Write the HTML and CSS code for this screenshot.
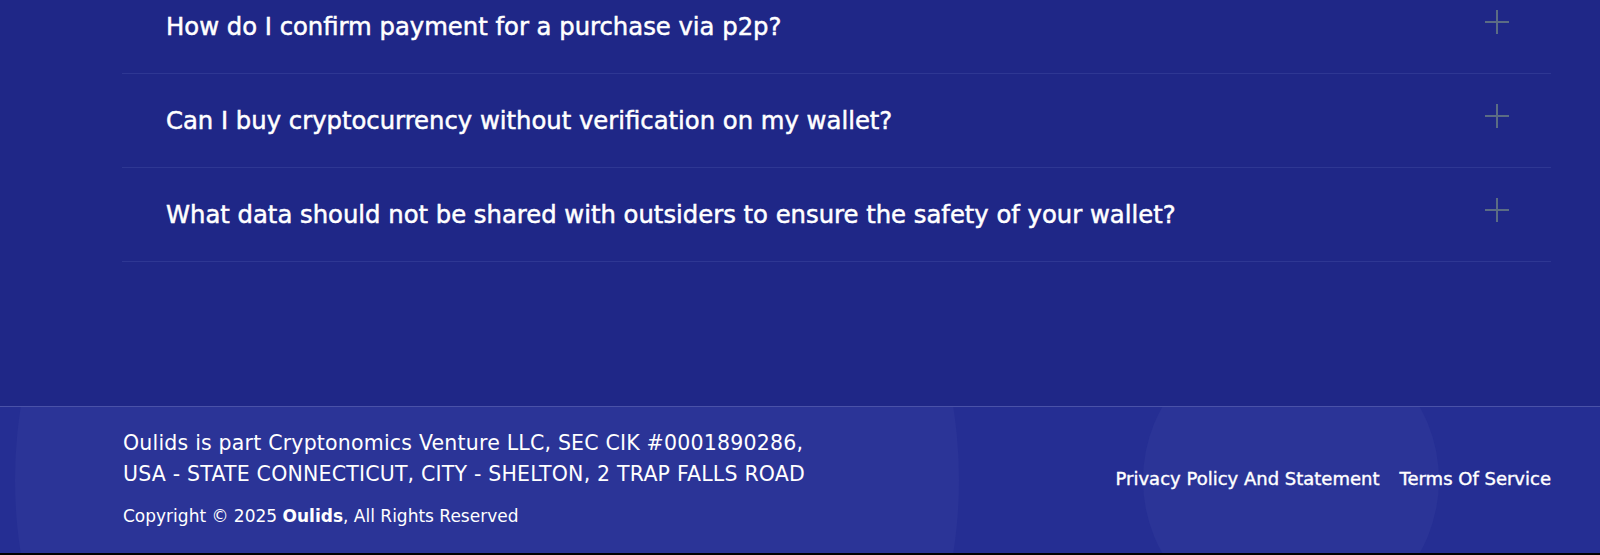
FILE: index.html
```html
<!DOCTYPE html>
<html lang="en">
<head>
    <meta charset="UTF-8">
    <title>FAQ - Oulids</title>
    <link rel="stylesheet" href="styles.css">
</head>
<body>
    <section class="faq">
        <div class="wrap">
            <div class="faq-item">
                <h3 class="faq-question">How do I confirm payment for a purchase via p2p?</h3>
                <svg class="faq-plus" width="24" height="24" viewBox="0 0 24 24"><path d="M12 0V24M0 12H24"/></svg>
            </div>
            <div class="faq-item">
                <h3 class="faq-question">Can I buy cryptocurrency without verification on my wallet?</h3>
                <svg class="faq-plus" width="24" height="24" viewBox="0 0 24 24"><path d="M12 0V24M0 12H24"/></svg>
            </div>
            <div class="faq-item">
                <h3 class="faq-question">What data should not be shared with outsiders to ensure the safety of your wallet?</h3>
                <svg class="faq-plus" width="24" height="24" viewBox="0 0 24 24"><path d="M12 0V24M0 12H24"/></svg>
            </div>
        </div>
    </section>

    <footer class="footer">
        <div class="footer-circle circle-left"></div>
        <div class="footer-circle circle-right"></div>
        <div class="wrap footer-inner">
            <div class="footer-info">
                <p class="footer-address">Oulids is part Cryptonomics Venture LLC, SEC CIK #0001890286,<br>USA - STATE CONNECTICUT, CITY - SHELTON, 2 TRAP FALLS ROAD</p>
                <p class="footer-copy">Copyright © 2025 <b>Oulids</b>, All Rights Reserved</p>
            </div>
            <nav class="footer-links">
                <a href="#">Privacy Policy And Statement</a>
                <a href="#">Terms Of Service</a>
            </nav>
        </div>
    </footer>
    <div class="page-edge"></div>
</body>
</html>
```

FILE: styles.css
```css
body {
    font-family: "DejaVu Sans", Inter, sans-serif;
    background-color: #1f2787;
    color: #fff;
    margin: 0;
    overflow: hidden;
}

.wrap {
    padding: 0 49px 0 122px;
}

.faq {
    margin-top: -20px;
    padding-bottom: 144px;
}

.faq-item {
    display: flex;
    align-items: center;
    justify-content: space-between;
    height: 93px;
    padding: 0 42px 0 44px;
    border-bottom: 1px solid #2e3793;
}

.faq-question {
    margin: 0;
    font-size: 24.3px;
    font-weight: 400;
    -webkit-text-stroke: 0.5px #fff;
}

.faq-plus {
    flex-shrink: 0;
    margin-bottom: 9px;
}

.faq-plus path {
    stroke: #5b6c84;
    stroke-width: 2;
}

.footer {
    position: relative;
    overflow: hidden;
    background-color: #252e93;
    border-top: 1px solid #4a52a8;
    height: 146px;
}

.footer-circle {
    position: absolute;
    border-radius: 50%;
    background-color: #2b3497;
}

.circle-left {
    left: 15px;
    top: -399px;
    width: 944px;
    height: 944px;
}

.circle-right {
    left: 1143px;
    top: -75px;
    width: 296px;
    height: 296px;
}

.footer-inner {
    position: relative;
    display: flex;
    align-items: center;
    justify-content: space-between;
    padding-top: 21px;
    padding-left: 123px;
}

.footer-info p {
    margin: 0;
}

.footer-address {
    font-size: 20.5px;
    line-height: 31px;
    letter-spacing: 0.2px;
}

.footer-copy {
    margin-top: 13px !important;
    font-size: 17px;
    line-height: 26px;
}

.footer-copy b {
    font-weight: 700;
}

.footer-links {
    display: flex;
    gap: 20px;
}

.footer-links a {
    color: #fff;
    text-decoration: none;
    font-size: 18px;
    -webkit-text-stroke: 0.4px #fff;
}

.page-edge {
    height: 2px;
    background-color: #000;
}
```
